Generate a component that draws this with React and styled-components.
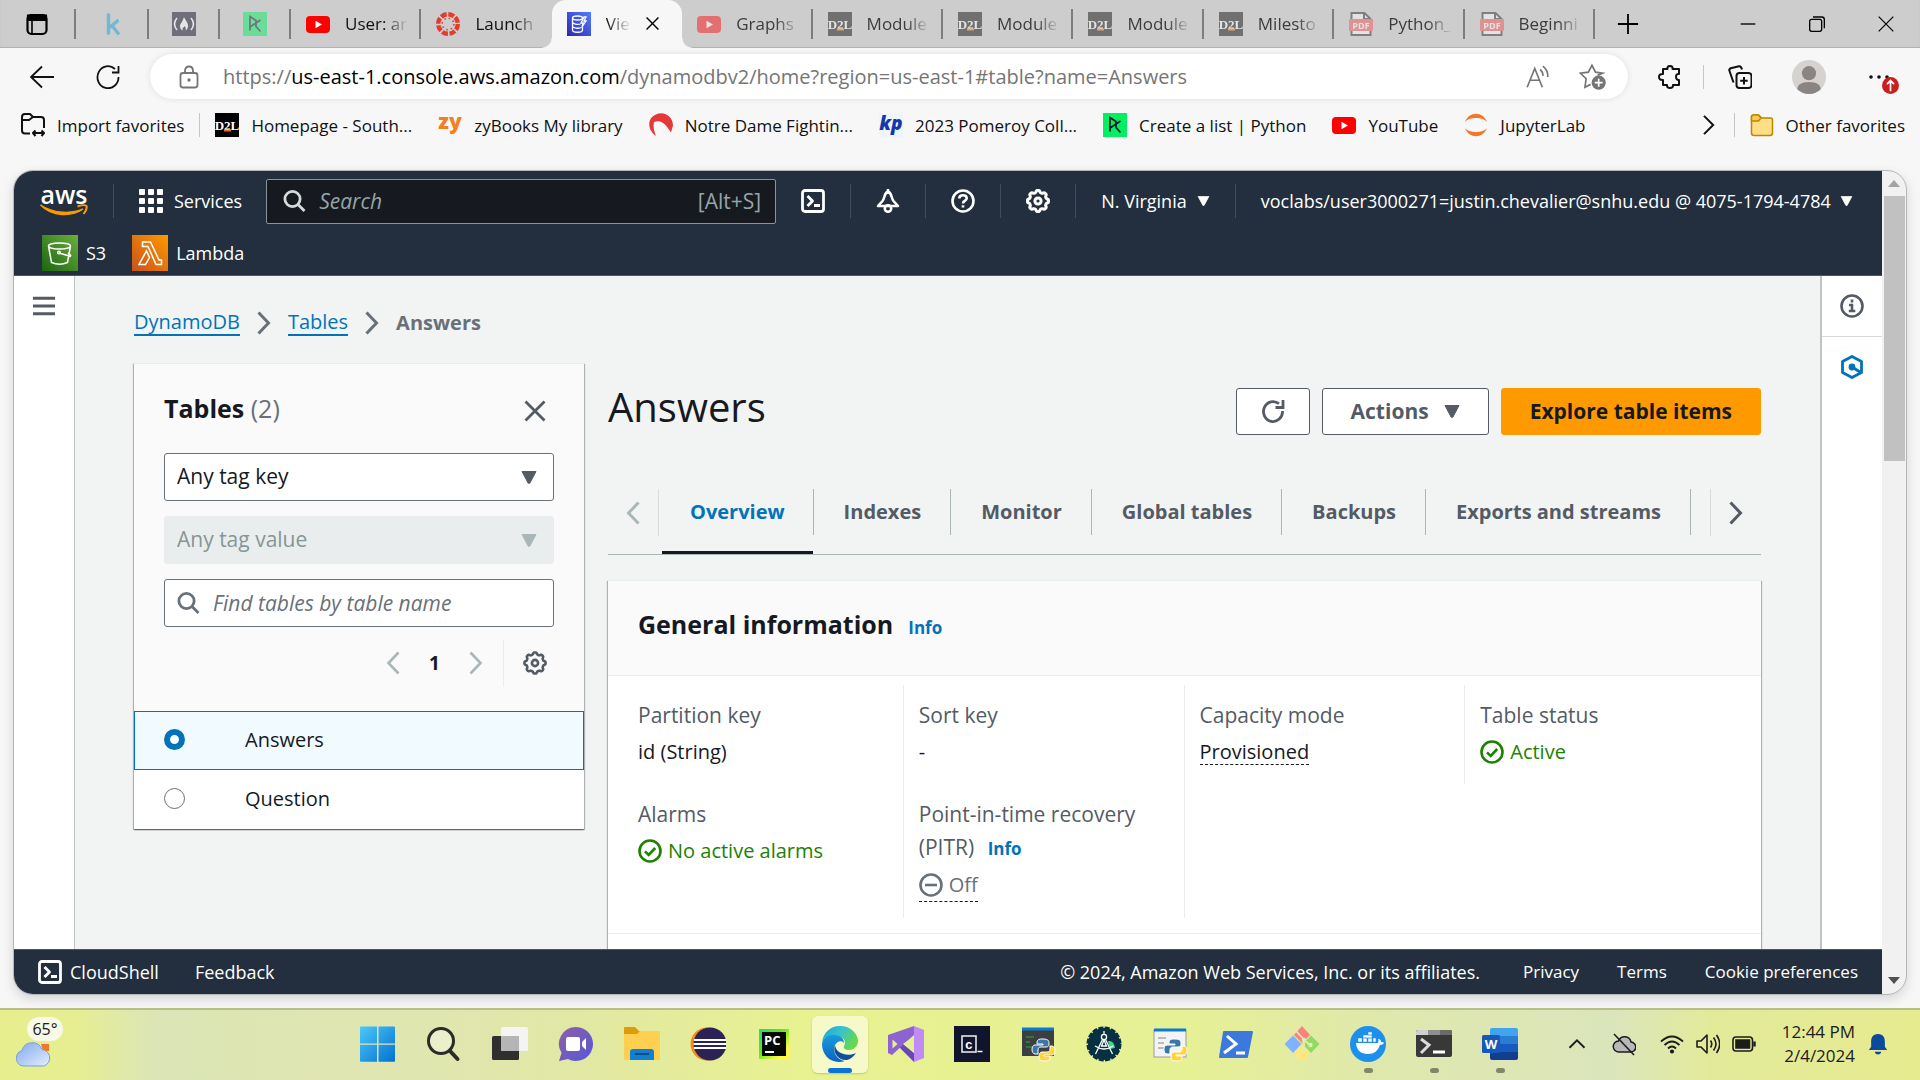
import React from 'react';
import styled, { createGlobalStyle, css } from 'styled-components';

const ui = '"Open Sans", "Noto Sans", sans-serif';
const c = {
  chrome: '#f7f7f7',
  tabStrip: '#cdcdcd',
  navy: '#232f3e',
  ink: '#16191f',
  slate: '#545b64',
  grey: '#687078',
  mist: '#aab7b8',
  line: '#eaeded',
  page: '#f2f3f3',
  blue: '#0073bb',
  green: '#1d8102',
  orange: '#ff9900',
};

const GlobalStyle = createGlobalStyle`
  *, *::before, *::after { box-sizing: border-box; }
  body { margin: 0; background: ${c.chrome}; font-family: ${ui}; color: ${c.ink}; }
  button, input, select { font: inherit; color: inherit; margin: 0; }
  button { background: none; border: 0; padding: 0; cursor: pointer; }
  h1, h2, p, dl, dd, dt { margin: 0; }
  a { color: inherit; text-decoration: none; }
  svg { display: block; flex: none; }
`;

/* ---------- drawing helpers ---------- */

const Svg = ({ w = 24, h = w, box = 24, children, ...rest }) => (
  <svg width={w} height={h} viewBox={`0 0 ${box} ${box}`} fill="none" aria-hidden="true" {...rest}>
    {children}
  </svg>
);

const Stroke = ({ width = 2, color = 'currentColor', ...rest }) => (
  <Svg stroke={color} strokeWidth={width} {...rest} />
);

const gearOutline = Array.from({ length: 97 }, (_, i) => {
  const a = (i / 96) * Math.PI * 2;
  const r = 9.6 + 1 * Math.tanh(2 * Math.cos(a * 8));
  return `${i ? 'L' : 'M'}${(12 + r * Math.sin(a)).toFixed(2)} ${(12 - r * Math.cos(a)).toFixed(2)}`;
}).join('') + 'Z';

const GearIcon = ({ width = 2.6 }) => (
  <Stroke width={width} strokeLinejoin="round">
    <path d={gearOutline} />
    <circle cx="12" cy="12" r="3.1" />
  </Stroke>
);
const CloudShellIcon = () => (
  <Stroke width={2.8} strokeLinejoin="round">
    <rect x="1.5" y="1.5" width="21" height="21" rx="2.5" />
    <path d="M6.5 7l5 5-5 5M13 16.5h6" />
  </Stroke>
);
const SearchIcon = ({ size = 24 }) => (
  <Stroke w={size} width={2.8}>
    <circle cx="9.5" cy="10" r="7.6" />
    <path d="M15 15.5l6.500 6.5" />
  </Stroke>
);
const Chevron = ({ left, color = c.grey, w = 14, width = 3 }) => (
  <svg width={w} height="24" viewBox="0 0 14 24" fill="none" stroke={color} strokeWidth={width} aria-hidden="true">
    <path d={left ? 'M12.5 1.5L2.5 12l10 10.5' : 'M1.5 1.5l10 10.5-10 10.5'} />
  </svg>
);
const Caret = ({ size = 16, color = 'currentColor' }) => (
  <svg width={size} height={size - 3} viewBox="0 0 16 13" aria-hidden="true">
    <path d="M1 .5h14L8.800 12.200H7.200Z" fill={color} stroke={color} strokeLinejoin="round" />
  </svg>
);
const CheckIcon = () => (
  <Stroke width={2.6} color={c.green}>
    <circle cx="12" cy="12" r="10.5" />
    <path d="M7 12.300l3.700 3.700 6.500-7" />
  </Stroke>
);
const OffIcon = () => (
  <Stroke width={2.6} color={c.grey}>
    <circle cx="12" cy="12" r="10.5" />
    <path d="M6 12h12" />
  </Stroke>
);

/* ---------- site icons ---------- */

const YouTube = () => (
  <Svg>
    <rect x="0" y="4" width="24" height="17" rx="4" fill="#f00" />
    <path d="M9.500 8.800l6.500 3.700-6.500 3.700z" fill="#fff" />
  </Svg>
);
const D2L = () => (
  <Svg>
    <rect width="24" height="24" fill="#000" />
    <text x="12" y="17" fontFamily="Liberation Serif, serif" fontWeight="700" fontSize="13" textAnchor="middle" fill="#fff">D2L</text>
    <path d="M9 17.500h7" stroke="#e87511" strokeWidth="2" />
  </Svg>
);
const Pdf = () => (
  <Svg>
    <path d="M2.500 1h13l6 6v16h-19z" fill="#fff" stroke="#222" strokeWidth="2" />
    <path d="M15 1v6h6" stroke="#222" strokeWidth="2" />
    <rect x="0" y="7" width="24" height="12" rx="1" fill="#f44b4b" />
    <text x="12" y="16.500" fontFamily="Open Sans, sans-serif" fontWeight="700" fontSize="9" textAnchor="middle" fill="#fff">PDF</text>
  </Svg>
);
const DataCamp = ({ bg = '#03ef62' }) => (
  <Svg>
    <rect width="24" height="24" fill={bg} />
    <path d="M7 18.500V4.500l6 4V14.500L17.500 19.500M17.500 8L7 15" stroke="#05192d" strokeWidth="1.700" />
  </Svg>
);
const Khan = () => (
  <Svg><path d="M7.500 1.500v21M17.500 8l-9 7.500M11 13.500l7 9" stroke="#14a0d8" strokeWidth="3.400" /></Svg>
);
const FreeCodeCamp = () => (
  <Svg>
    <rect width="24" height="24" fill="#0a0a23" />
    <path d="M5 6q-5 6 0 12M19 6q5 6 0 12" stroke="#fff" strokeWidth="1.600" />
    <path d="M12 5c1 3 4 5 4 9 0 2-1 3.500-2.500 4.500.8-2 .2-3-1-4.500-.5 1.500-2 1.500-2 3 0 .8.300 1.200.700 1.600C9 18 8 16.500 8 14c0-2 2-3 4-9z" fill="#fff" />
  </Svg>
);
const Canvas = () => (
  <Svg>
    <circle cx="12" cy="12" r="9.800" stroke="#e53b2e" strokeWidth="4.400" strokeDasharray="6 1.700" />
    <circle cx="12" cy="12" r="5.800" stroke="#e53b2e" strokeWidth="1.600" strokeDasharray="1.500 3.055" />
  </Svg>
);
const Dynamo = () => (
  <Svg>
    <defs>
      <linearGradient id="dyn" x1="0" y1="1" x2="1" y2="0"><stop stopColor="#2e27ad" /><stop offset="1" stopColor="#527fff" /></linearGradient>
    </defs>
    <rect width="24" height="24" fill="url(#dyn)" />
    <g stroke="#fff" strokeWidth="1.300">
      <ellipse cx="10.500" cy="6" rx="5" ry="2" />
      <path d="M5.500 6v12c0 3 10 3 10 0v-3M5.500 10c0 2 5 3 8 2M5.500 14c0 2 6 3 9 1.500M17 5l-3 6h2l-1 4 4-6h-2l2-4z" />
    </g>
  </Svg>
);
const ZyBooks = () => (
  <Svg><text x="12" y="16" fontFamily="Open Sans, sans-serif" fontWeight="800" fontSize="21" textAnchor="middle" fill="#f57f20">zy</text></Svg>
);
const NotreDame = () => (
  <Svg><path d="M7 23C-2 17-2 5 7 1.500c8-4 17 2 17 11l-2 7C17 12 13 6 5 9c-1 5 0 9 2 14z" fill="#e4383b" /></Svg>
);
const Kp = () => (
  <Svg>
    <rect width="24" height="24" fill="#eef5fd" />
    <text x="12" y="17" fontFamily="Open Sans, sans-serif" fontWeight="800" fontStyle="italic" fontSize="19" textAnchor="middle" fill="#1437ad">kp</text>
  </Svg>
);
const Jupyter = () => (
  <Svg><path d="M1 9C5-2 19-2 23 9 19 3.500 5 3.500 1 9zM1 15c4 11 18 11 22 0-4 5.500-18 5.500-22 0z" fill="#f37726" /></Svg>
);
const FolderSmall = () => (
  <Svg>
    <path d="M1.500 4q0-2 2-2h5l3 3h9q2 0 2 2v13q0 2.500-2.500 2.500H4q-2.500 0-2.500-2.500z" fill="#ffdf85" stroke="#b8870b" strokeWidth="1.500" />
    <path d="M1.500 4q0-2 2-2h5l2.500 3-2.500 3h-7z" fill="#f9cb45" stroke="#b8870b" strokeWidth="1.500" />
  </Svg>
);

/* ---------- browser chrome ---------- */

const Desktop = styled.div`
  display: flex;
  flex-direction: column;
  height: 100vh;
  overflow: hidden;
`;

const TabStrip = styled.header`
  display: flex;
  flex: none;
  height: 48px;
  background: ${c.tabStrip};
  box-shadow: inset 0 -1px 1px rgba(0, 0, 0, 0.14);
`;

const SiteTabs = styled.div`
  flex: 1;
  min-width: 0;
  display: grid;
  grid-auto-flow: column;
  grid-auto-columns: minmax(0, 1fr);
`;

const stripDivider = css`
  &::after {
    content: '';
    flex: none;
    width: 2px;
    height: 30px;
    background: ${(p) => (p.$bare ? 'transparent' : '#7d7d7d')};
  }
`;

const PinnedTab = styled.button`
  flex: none;
  width: ${(p) => (p.$first ? 78 : 71)}px;
  padding-right: ${(p) => (p.$first ? 2 : 0)}px;
  display: flex;
  align-items: center;
  ${stripDivider}
  > svg { margin: auto; opacity: ${(p) => (p.$first ? 1 : 0.48)}; }
`;

const Tab = styled.button`
  position: relative;
  min-width: 0;
  display: flex;
  align-items: center;
  gap: 15px;
  padding: 0 0 1px 15px;
  font-size: 17px;
  color: ${(p) => (p.$asleep ? '#3c3c3c' : '#111')};
  ${stripDivider}
  &::after { margin-left: -4px; }
  > svg:first-child { opacity: ${(p) => (p.$asleep ? 0.45 : 1)}; }
  ${(p) =>
    p.$active &&
    css`
      padding-right: 23px;
      background: ${c.chrome};
      border-radius: 14px 14px 0 0;
      &::before, &::after {
        content: '';
        position: absolute;
        bottom: 0;
        width: 10px;
        height: 10px;
        margin: 0;
      }
      &::before { left: -10px; background: radial-gradient(circle at 0 0, transparent 9px, ${c.chrome} 10px); }
      &::after { right: -10px; background: radial-gradient(circle at 100% 0, transparent 9px, ${c.chrome} 10px); }
    `}
`;

const TabLabel = styled.span`
  flex: 1;
  min-width: 0;
  overflow: hidden;
  white-space: nowrap;
  text-align: left;
  -webkit-mask-image: linear-gradient(to right, #000 calc(100% - 24px), transparent);
  mask-image: linear-gradient(to right, #000 calc(100% - 24px), transparent);
`;

const StripEnd = styled.div`
  flex: none;
  width: 325px;
  display: flex;
  align-items: center;
  justify-content: space-between;
  padding: 0 26px 0 22px;
`;

const WindowButtons = styled.div`
  display: flex;
  gap: 53px;
`;

const Toolbar = styled.div`
  flex: none;
  display: flex;
  align-items: center;
  height: 57px;
  padding: 0 2px 0 9px;
`;

const ToolButton = styled.button`
  flex: none;
  position: relative;
  width: ${(p) => p.$width || 66}px;
  height: 45px;
  display: grid;
  place-items: center;
`;

const AddressBar = styled.div`
  flex: 1;
  display: flex;
  align-items: center;
  height: 45px;
  margin: 0 9px;
  padding: 0 22px 0 27px;
  border-radius: 23px;
  background: #fff;
  box-shadow: 0 0 6px rgba(0, 0, 0, 0.1);
  color: #757575;
`;

const Url = styled.a`
  flex: 1;
  margin-left: 22px;
  font-size: 20px;
  white-space: nowrap;
  b { font-weight: 400; color: #000; }
`;

const AddressTools = styled.div`
  display: flex;
  gap: 28px;
`;

const ThinRule = styled.span`
  flex: none;
  width: 1px;
  height: ${(p) => p.$height || 24}px;
  background: ${(p) => p.$color || '#c6c6c6'};
`;

const Avatar = styled.span`
  width: 34px;
  height: 34px;
  border-radius: 50%;
  overflow: hidden;
  background: #d5d2cf;
`;

const UpdateBadge = styled.span`
  position: absolute;
  right: 19px;
  bottom: 5px;
`;

const Favorites = styled.nav`
  flex: none;
  display: flex;
  align-items: center;
  gap: 26px;
  height: 40px;
  padding: 0 15px 0 21px;
  font-size: 17px;
  white-space: nowrap;
  color: #111;
`;

const Favorite = styled.a`
  display: flex;
  align-items: center;
  gap: 12px;
`;

const FavGroup = styled.div`
  display: flex;
  align-items: center;
  gap: 15px;
  margin-left: ${(p) => (p.$end ? 'auto' : 0)};
`;

/* ---------- page frame ---------- */

const Frame = styled.div`
  flex: 1;
  min-height: 0;
  display: flex;
  margin: 25px 13px 13px;
  border: 1px solid #b4b7ba;
  border-radius: 20px;
  overflow: hidden;
  background: #f1f1f1;
  box-shadow: 0 4px 12px rgba(0, 0, 0, 0.14);
`;

const Page = styled.div`
  flex: 1;
  min-width: 0;
  display: flex;
  flex-direction: column;
`;

const ScrollTrack = styled.div`
  flex: none;
  width: 24px;
  display: flex;
  flex-direction: column;
  align-items: center;
  padding: 9px 0 10px;
`;

const ScrollThumb = styled.div`
  width: 21px;
  flex: 0 0 33%;
  margin: 9px 0 auto;
  background: #c1c1c1;
`;

/* ---------- aws header and footer ---------- */

const AwsHeader = styled.header`
  flex: none;
  background: ${c.navy};
  border-bottom: 1px solid #4b5563;
  color: #fff;
  font-size: 18px;
  white-space: nowrap;
`;

const HeaderRow = styled.div`
  display: flex;
  align-items: center;
  height: 60px;
  padding-left: 26px;
`;

const Shortcuts = styled.nav`
  display: flex;
  gap: 26px;
  height: 44px;
  align-items: center;
  padding-left: 28px;
`;

const Shortcut = styled.a`
  display: flex;
  align-items: center;
  gap: 8px;
`;

const Logo = styled.a`
  width: 48px;
  display: flex;
  flex-direction: column;
  align-items: center;
  padding-bottom: 2px;
  font-size: 25px;
  font-weight: 600;
  line-height: 20px;
  margin-right: 25px;
`;

const HeaderRule = styled(ThinRule).attrs({ $height: 34, $color: '#414d5c' })``;

const HeaderButton = styled.button`
  display: flex;
  align-items: center;
  gap: ${(p) => p.$gap || 10}px;
  padding: 0 25px;
`;

const HeaderIcon = styled.button`
  flex: none;
  width: 75px;
  height: 34px;
  display: grid;
  place-items: center;
  border-right: 1px solid #414d5c;
  color: #fff;
`;

const HeaderSearch = styled.label`
  flex: 0 1 510px;
  min-width: 0;
  display: flex;
  align-items: center;
  gap: 12px;
  height: 45px;
  margin-left: -1px;
  padding: 0 14px 1px 16px;
  border: 1px solid #879596;
  border-radius: 2px;
  background: #161a20;
  color: #d5dbdb;
  font-size: 21px;
  kbd { font-family: inherit; color: #95a5a6; }
`;

const BareInput = styled.input`
  flex: 1;
  min-width: 0;
  padding: 0;
  border: 0;
  outline: 0;
  background: none;
  &::placeholder { color: ${(p) => p.$hint}; font-style: italic; opacity: 1; }
`;

const AwsFooter = styled.footer`
  flex: none;
  display: flex;
  align-items: center;
  height: 45px;
  padding: 0 24px 1px;
  border-top: 1px solid #4b5563;
  background: ${c.navy};
  color: #fff;
  font-size: 17px;
  white-space: nowrap;
`;

const FooterLink = styled.a`
  display: flex;
  align-items: center;
  gap: 8px;
  margin-left: ${(p) => p.$lead || 0}px;
  font-size: ${(p) => (p.$tool ? 18 : 17)}px;
`;

const Copyright = styled.span`
  margin-left: auto;
  font-size: 18px;
`;

/* ---------- console body ---------- */

const Body = styled.div`
  flex: 1;
  min-height: 0;
  display: flex;
  background: ${c.page};
`;

const SideRail = styled.aside`
  flex: none;
  width: ${(p) => (p.$right ? 62 : 61)}px;
  display: flex;
  flex-direction: column;
  background: #fff;
  color: ${c.slate};
  border: 0 solid #bcc4c6;
  border-width: ${(p) => (p.$right ? '0 0 0 2px' : '0 1px 0 0')};
`;

const RailButton = styled.button`
  height: ${(p) => (p.$lined ? 61 : 60)}px;
  display: grid;
  place-items: center;
  border-bottom: ${(p) => (p.$lined ? `1px solid #d5dbdb` : 0)};
`;

const Content = styled.div`
  flex: 1;
  min-width: 0;
  padding: 31px 59px 0;
  overflow: hidden;
`;

const Breadcrumbs = styled.nav`
  display: flex;
  align-items: center;
  gap: 17px;
  height: 31px;
  margin-bottom: 25px;
  font-size: 20px;
  line-height: 25px;
  a { color: ${c.blue}; border-bottom: 2px solid ${c.blue}; }
  span { color: ${c.grey}; font-weight: 700; }
`;

const Split = styled.div`
  display: flex;
  align-items: flex-start;
  gap: 24px;
`;

const cardShadow = css`
  background: #fff;
  border-top: 1px solid ${c.line};
  box-shadow: 0 1px 1px rgba(0, 28, 36, 0.35), 1px 1px 1px rgba(0, 28, 36, 0.25), -1px 1px 1px rgba(0, 28, 36, 0.25);
`;

const TablesPanel = styled.section`
  flex: 0 0 450px;
  ${cardShadow}
`;

const PanelTop = styled.div`
  display: flex;
  flex-direction: column;
  gap: 15px;
  padding: 29px 30px 27px;
  background: #fafafa;
`;

const PanelHeading = styled.div`
  display: flex;
  justify-content: space-between;
  height: 45px;
  button { align-self: flex-start; padding: 6px 7px; color: ${c.slate}; }
`;

const Heading = styled.h2`
  font-size: 25px;
  line-height: ${(p) => p.$line || 30}px;
  font-weight: 700;
  span { font-weight: 400; color: ${c.grey}; }
`;

const field = css`
  width: 100%;
  height: 48px;
  border: 1px solid ${c.grey};
  border-radius: 3px;
  background: #fff;
  font-size: 21px;
`;

const SelectBox = styled.label`
  position: relative;
  display: block;
  select {
    ${field}
    appearance: none;
    padding: 0 12px 2px;
    color: ${c.ink};
    &:disabled { opacity: 1; color: #879596; background: #eaeded; border-color: #eaeded; }
  }
  svg { position: absolute; right: 17px; top: 18px; pointer-events: none; }
`;

const FindBox = styled.label`
  ${field}
  display: flex;
  align-items: center;
  gap: 12px;
  padding: 0 12px 1px;
  color: ${c.grey};
`;

const Pager = styled.div`
  display: flex;
  align-items: center;
  justify-content: flex-end;
  height: 42px;
  font-size: 19px;
  font-weight: 700;
  button:last-child { padding: 0 7px 0 19px; color: ${c.slate}; }
`;

const PageNumber = styled.button`
  width: 69px;
`;

const PagerNext = styled.button`
  margin-right: 20px;
`;

const TableList = styled.table`
  width: 100%;
  border-collapse: collapse;
  font-size: 20px;
`;

const TableRow = styled.tr`
  height: 59px;
  background: ${(p) => (p.$selected ? '#f1faff' : '#fff')};
  outline: ${(p) => (p.$selected ? `1px solid ${c.blue}` : 'none')};
  outline-offset: -1px;
  td { padding: 0 0 2px; }
  td:first-child { width: 111px; padding-left: 30px; }
`;

const Radio = styled.input`
  appearance: none;
  display: block;
  width: 21px;
  height: 21px;
  border: 1px solid ${c.grey};
  border-radius: 50%;
  background: #fff;
  &:checked { border: 6px solid ${c.blue}; }
`;

const Main = styled.main`
  flex: 1;
  min-width: 0;
  padding-top: 25px;
`;

const TitleRow = styled.div`
  display: flex;
  gap: 12px;
  height: 47px;
`;

const Title = styled.h1`
  flex: 1;
  font-size: 40px;
  line-height: 38px;
  font-weight: 400;
`;

const Action = styled.button`
  display: flex;
  align-items: center;
  justify-content: center;
  gap: 15px;
  padding: 0 ${(p) => p.$pad || 28}px 1px;
  border: 1px solid ${(p) => (p.$primary ? c.orange : c.slate)};
  border-radius: 3px;
  background: ${(p) => (p.$primary ? c.orange : '#fff')};
  color: ${(p) => (p.$primary ? c.ink : c.slate)};
  font-size: 21px;
  font-weight: 700;
`;

const TabBar = styled.div`
  display: flex;
  height: 66px;
  margin-top: 54px;
  border-bottom: 1px solid ${c.mist};
`;

const TabScroll = styled.button`
  flex: none;
  width: 51px;
  height: 47px;
  display: grid;
  place-items: center;
  border: 0 solid #d5dbdb;
  border-width: ${(p) => (p.$end ? '0 0 0 1px' : '0 1px 0 0')};
`;

const TabList = styled.div`
  flex: 1;
  min-width: 0;
  display: flex;
  padding-left: 3px;
  overflow: hidden;
`;

const ViewTab = styled.button`
  flex: none;
  height: 65px;
  display: flex;
  align-items: flex-start;
  margin-right: 1px;
  border-bottom: 3px solid ${(p) => (p.$active ? c.ink : 'transparent')};
  color: ${(p) => (p.$active ? c.blue : c.slate)};
  font-size: 20px;
  font-weight: 700;
  span {
    height: 46px;
    line-height: 46px;
    padding: ${(p) => (p.$active ? '0 28px' : '0 29px 0 30px')};
    margin-right: -1px;
    border-right: 1px solid ${c.mist};
  }
`;

const Card = styled.section`
  margin-top: 25px;
  ${cardShadow}
`;

const CardHeader = styled.div`
  display: flex;
  align-items: baseline;
  gap: 15px;
  height: 95px;
  padding: 25px 30px 0;
  background: #fafafa;
  border-bottom: 1px solid ${c.line};
`;

const InfoLink = styled.a`
  font-size: 17px;
  font-weight: 700;
  color: ${c.blue};
`;

const Facts = styled.dl`
  display: grid;
  grid-template-columns: repeat(4, 1fr);
  padding: 9px 15px 15px;
  border-bottom: 1px solid ${c.line};
`;

const Fact = styled.div`
  padding: 14px 15px 16px;
  border-right: ${(p) => (p.$last ? 0 : `1px solid ${c.line}`)};
  font-size: 20px;
  line-height: 33px;
  dt { color: ${c.slate}; font-size: 21px; }
  dd { display: flex; margin-top: 3px; }
  dt a { margin-left: 8px; }
`;

const Status = styled.span`
  display: flex;
  align-items: center;
  gap: 6px;
  color: ${(p) => (p.$off ? c.grey : c.green)};
`;

const Hint = styled.span`
  height: ${(p) => p.$height || 30}px;
  border-bottom: 1px dashed ${c.ink};
`;

const Below = styled.div`
  height: 60px;
`;

/* ---------- taskbar ---------- */

const Taskbar = styled.footer`
  flex: none;
  display: flex;
  align-items: center;
  height: 72px;
  padding-bottom: 2px;
  border-top: 2px solid #b7be88;
  background: linear-gradient(90deg, #e8ee8d 0%, #e6ee92 4%, #dce5b6 8%, #e0e6ae 24%, #e2e9a0 32%, #e8f290 42%, #e6f095 62%, #dfe8ac 72%, #dbe5bc 84%, #e2ea9a 89%, #e7ea8f 100%);
  color: #1c1c1c;
`;

const Weather = styled.button`
  flex: none;
  position: relative;
  width: 345px;
  height: 56px;
  padding-left: 15px;
  > svg { margin-top: 18px; }
`;

const Temperature = styled.span`
  position: absolute;
  left: 27px;
  top: 1px;
  width: 36px;
  height: 24px;
  border-radius: 12px;
  background: rgba(250, 250, 240, 0.9);
  font-size: 16px;
  line-height: 24px;
  text-align: center;
`;

const Apps = styled.nav`
  flex: none;
  display: flex;
`;

const AppButton = styled.button`
  position: relative;
  width: 66px;
  height: 57px;
  display: grid;
  place-items: center;
  ${(p) =>
    p.$current &&
    css`
      &::before {
        content: '';
        position: absolute;
        inset: 0 5px;
        border-radius: 6px;
        background: rgba(255, 255, 240, 0.6);
        box-shadow: 0 1px 2px rgba(0, 0, 0, 0.18);
      }
    `}
  ${(p) =>
    (p.$running || p.$current) &&
    css`
      &::after {
        content: '';
        position: absolute;
        bottom: 0;
        width: ${p.$current ? 24 : 9}px;
        height: 5px;
        border-radius: 3px;
        background: ${p.$current ? '#0a74d4' : '#82876a'};
      }
    `}
  > svg { position: relative; }
`;

const Tray = styled.div`
  flex: 1;
  display: flex;
  align-items: center;
  justify-content: flex-end;
  gap: 12px;
  padding-right: 31px;
`;

const TrayGroup = styled.div`
  display: flex;
  align-items: center;
  gap: 26px;
  margin-right: 12px;
`;

const Clock = styled.button`
  margin-left: 14px;
  font-size: 17px;
  line-height: 24px;
  text-align: right;
`;

const AppIcon = (p) => <Svg w={36} box={36} {...p} />;

const PythonMark = () => (
  <g stroke="#fff" strokeWidth="1">
    <path d="M23 14c-5 0-5 2-5 5h6v1h-8c-4 0-4 9 0 9h3v-4c0-2 1-3 3-3h5c2 0 3-1 3-3 0-4-1-5-7-5z" transform="translate(-1 -1)" fill="#3a77a8" />
    <path d="M24 36c5 0 5-2 5-5h-6v-1h8c4 0 4-9 0-9h-2v3c0 2-1 3-3 3h-5c-2 0-3 2-3 4 0 4 1 5 6 5z" transform="translate(1 -1)" fill="#ffd43b" />
  </g>
);

const apps = [
  ['Start', <AppIcon><defs><linearGradient id="win" x1="0" y1="0" x2="1" y2="1"><stop stopColor="#4cc8fa" /><stop offset="1" stopColor="#0370d0" /></linearGradient></defs><path d="M0 1.500Q0 .5 1 .5h16v17H0zM18.500.5H34q1 0 1 1v16H18.500zM0 18.800h17v17H1q-1 0-1-1zM18.500 18.800H35v16q0 1-1 1H18.500z" fill="url(#win)" /></AppIcon>],
  ['Search', <AppIcon><circle cx="15" cy="15" r="12.500" stroke="#2b2b2b" strokeWidth="3" fill="#fff" fillOpacity=".35" /><path d="M24 25l7.500 8" stroke="#2b2b2b" strokeWidth="4" strokeLinecap="round" /></AppIcon>],
  ['Task view', <AppIcon><rect x="0" y="10" width="27" height="24" rx="1.500" fill="#2f2f2f" /><rect x="9" y="1" width="27" height="24" rx="1.500" fill="#f4f4f4" /><path d="M9 10h18v15H9z" fill="#b5b5b5" /></AppIcon>],
  ['Chat', <AppIcon><defs><linearGradient id="chat" x1="0" y1="0" x2="1" y2="1"><stop stopColor="#8f60a8" /><stop offset="1" stopColor="#5557d6" /></linearGradient></defs><path d="M18 1a17 17 0 1 1-8 32l-9 2 2.500-8A17 17 0 0 1 18 1z" fill="url(#chat)" /><rect x="8" y="11" width="14" height="14" rx="2" fill="#fff" /><path d="M24 16l4-4v12l-4-4z" fill="#fff" /></AppIcon>],
  ['File Explorer', <AppIcon><path d="M0 2q0-1 1-1h10l4 4h20v10H0z" fill="#dd9d0a" /><path d="M0 8h13l3-3h19q1 0 1 1v27q0 1-1 1H1q-1 0-1-1z" fill="#ffcf52" /><path d="M6 34V26q0-3 3-3h18q3 0 3 3v8z" fill="#1180d2" /><path d="M11 28h14" stroke="#0a4c86" strokeWidth="2" /></AppIcon>],
  ['Eclipse', <AppIcon><circle cx="17" cy="18" r="16.500" fill="#f48b1f" /><circle cx="20" cy="18" r="16.500" fill="#2c2255" /><path d="M4 14h32M3.500 18h33M4 22h32" stroke="#fff" strokeWidth="1.800" /></AppIcon>],
  ['PyCharm', <AppIcon><defs><linearGradient id="pc" x1="0" y1="0" x2="1" y2="1"><stop stopColor="#21d789" /><stop offset=".4" stopColor="#5fe61a" /><stop offset=".8" stopColor="#fcf84a" /></linearGradient></defs><rect x="3" y="3" width="30" height="30" fill="url(#pc)" /><rect x="6" y="6" width="24" height="24" fill="#050805" /><text x="8" y="19" fontFamily="Open Sans, sans-serif" fontWeight="700" fontSize="13" fill="#fff">PC</text><path d="M9 26h9" stroke="#fff" strokeWidth="2" /></AppIcon>],
  ['Microsoft Edge', <AppIcon><defs><linearGradient id="eg" x1="0" y1="0" x2="1" y2=".5"><stop stopColor="#1f9fe0" /><stop offset=".5" stopColor="#36c2cf" /><stop offset="1" stopColor="#66d84c" /></linearGradient><linearGradient id="eb" x1="0" y1="0" x2="0" y2="1"><stop stopColor="#189ddc" /><stop offset="1" stopColor="#0b62c4" /></linearGradient></defs><path d="M0 17C1 6 9 0 18 0c11 0 18 8 18 15 0 6-5 9-9 9-4 0-6-2-5-4 3-5-1-9-6-10C8 8 2 11 0 17z" fill="url(#eg)" /><path d="M0 18c1-6 7-10 13-9 6 0 9 4 9 8-2-3-7-2-9 2-3 7 2 15 10 16C10 39 0 30 0 18z" fill="url(#eb)" /><path d="M13 19c-3 8 4 16 12 15 4-1 7-4 9-7-8 4-20 1-21-8z" fill="#114f9c" /></AppIcon>],
  ['Visual Studio', <AppIcon><path d="M0 10l4-2 22 19V36z" fill="#6b47b5" /><path d="M0 9v18l4 2L26 9V0z" fill="#8f63cf" /><path d="M4.500 13.500v9l5-4.500z" fill="#e5ee98" /><path d="M26 0l10 4v28l-10 4z" fill="#c08bf5" /><path d="M26 10L15 18l11 9z" fill="#e5ee98" /></AppIcon>],
  ['Console', <AppIcon><rect width="36" height="36" fill="#10142c" /><rect x="8" y="10" width="14" height="16" stroke="#e6e6e6" strokeWidth="1.600" /><text x="15" y="22.500" fontFamily="Liberation Mono, monospace" fontWeight="700" fontSize="13" textAnchor="middle" fill="#fff">c</text><path d="M23.500 25.500h5" stroke="#fff" strokeWidth="1.500" /></AppIcon>],
  ['Python console', <AppIcon><rect x="2" y="2" width="32" height="28" fill="#3c3f41" /><path d="M2 3h32" stroke="#0a7bd2" strokeWidth="3" /><path d="M6 11h8M6 16h4M6 21h7" stroke="#2f8a38" strokeWidth="1.500" /><PythonMark /></AppIcon>],
  ['Android Studio', <AppIcon><circle cx="18" cy="18" r="16" fill="#073042" stroke="#073042" strokeWidth="3" strokeDasharray="5 1.300" /><path d="M22 15q6-1 7 7l-5 1z" fill="#3ddc84" /><g stroke="#fff" strokeWidth="1.300"><circle cx="18" cy="11" r="2.600" /><path d="M18 5V8.500M16.500 13.500L9.500 28M19.500 13.500L26.500 28M9 20q9 6 18 0M15.500 20l2.500-6 2.500 6z" /></g></AppIcon>],
  ['IDLE', <AppIcon><rect x="2" y="4" width="32" height="27" fill="#f3f3f3" stroke="#9b9b9b" /><path d="M2 4h32" stroke="#0a7bd2" strokeWidth="3" /><path d="M6 12h8M6 17h6M6 22h7" stroke="#a9a9a9" strokeWidth="1.500" /><PythonMark /></AppIcon>],
  ['PowerShell', <AppIcon><path d="M6 5h28q1 0 1 1l-5 25q0 1-1 1H2q-1 0-1-1L5 6q0-1 1-1z" fill="#3d78dc" /><path d="M9 10l9 8-12 9M18 27h9" stroke="#fff" strokeWidth="3" /></AppIcon>],
  ['Git', <AppIcon><path d="M18 0l8 9-8 8-8-8z" fill="#fb8080" /><path d="M9 9.500l8.500 8.500L9 27 .5 18z" fill="#80b3ff" /><path d="M27 9.500l8.500 8.500-8.500 9-8.500-9z" fill="#8fdb66" /><path d="M18 19l8 8.500-8 8.500-8-8.500z" fill="#ffe680" /><path d="M12 5l8 8.500V24M20 14l6 5" stroke="#e3ecac" strokeWidth="1.800" /><circle cx="20" cy="14" r="2.200" fill="#e3ecac" /><circle cx="20" cy="24" r="2.200" fill="#e3ecac" /><circle cx="26.500" cy="19" r="2.200" fill="#e3ecac" /></AppIcon>],
  ['Docker', <AppIcon><circle cx="18" cy="18" r="18" fill="#1d90ec" /><path d="M6 17h22q1-3 0-4 3 0 3 3 2-.5 3 1-1 2-4 2-3 9-12 9-11 0-12-11z" fill="#fff" /><path d="M8 12h4v4H8zM13 12h4v4h-4zM18 12h4v4h-4zM23 12h3v4h-3zM13 9h9v3h-9zM18 6h4v3h-4z" fill="#fff" stroke="#1d90ec" strokeWidth=".5" /></AppIcon>, true],
  ['Terminal', <AppIcon><rect x="0" y="4" width="36" height="27" rx="2" fill="#383838" /><path d="M0 9V6q0-2 2-2h10v5z" fill="#cfcfcf" /><path d="M12 4h12v5H12z" fill="#8f8f8f" /><path d="M24 4h10q2 0 2 2v3H24z" fill="#6a6a6a" /><path d="M5 13l8 6-8 8" stroke="#dcdcdc" strokeWidth="3" /><path d="M17 26h12" stroke="#fff" strokeWidth="3" /></AppIcon>, true],
  ['Word', <AppIcon><path d="M8 4q0-2 2-2h24q2 0 2 2v6H8z" fill="#41a5ee" /><path d="M8 10h28v8H8z" fill="#2b7cd3" /><path d="M8 18h28v8H8z" fill="#185abd" /><path d="M8 26h28v6q0 2-2 2H10q-2 0-2-2z" fill="#103f91" /><rect x="0" y="9" width="18" height="18" rx="1.500" fill="#1858b8" /><text x="9" y="22.500" fontFamily="Open Sans, sans-serif" fontWeight="700" fontSize="13" textAnchor="middle" fill="#fff">W</text></AppIcon>, true],
];

const sites = [
  ['User: arr', <YouTube />, { $bare: false }],
  ['Launch A', <Canvas />, { $bare: true }],
  ['View', <Dynamo />, { $active: true }],
  ['Graphs i', <YouTube />, { $asleep: true }],
  ['Module', <D2L />, { $asleep: true }],
  ['Module', <D2L />, { $asleep: true }],
  ['Module', <D2L />, { $asleep: true }],
  ['Milesto', <D2L />, { $asleep: true }],
  ['Python_', <Pdf />, { $asleep: true }],
  ['Beginni', <Pdf />, { $asleep: true }],
];

const favorites = [
  ['zyBooks My library', <ZyBooks />],
  ['Notre Dame Fightin...', <NotreDame />],
  ['2023 Pomeroy Coll...', <Kp />],
  ['Create a list | Python', <DataCamp />],
  ['YouTube', <YouTube />],
  ['JupyterLab', <Jupyter />],
];

const views = ['Overview', 'Indexes', 'Monitor', 'Global tables', 'Backups', 'Exports and streams'];

function Browser() {
  return (
    <>
      <TabStrip>
        <PinnedTab $first aria-label="Tab actions">
          <Stroke w={24} width={2.2} color="#000"><rect x="2.500" y="3" width="19" height="19" rx="4" /><path d="M3 3.500h18v4.500H3z" fill="#000" /><path d="M7 8v14" strokeWidth="1.600" /></Stroke>
        </PinnedTab>
        <PinnedTab aria-label="Khan Academy"><Khan /></PinnedTab>
        <PinnedTab aria-label="freeCodeCamp"><FreeCodeCamp /></PinnedTab>
        <PinnedTab aria-label="DataCamp"><DataCamp /></PinnedTab>
        <SiteTabs>
          {sites.map(([label, icon, state], i) => (
            <Tab key={i} {...state}>
              {icon}
              <TabLabel>{label}</TabLabel>
              {state.$active && <Stroke w={13} width={2.6} color="#000"><path d="M1 1l22 22M23 1L1 23" /></Stroke>}
            </Tab>
          ))}
        </SiteTabs>
        <StripEnd>
          <button aria-label="New tab"><Stroke w={22} width={2} color="#000"><path d="M12 1v22M1 12h22" /></Stroke></button>
          <WindowButtons>
            <button aria-label="Minimize"><Stroke w={16} width={2} color="#000"><path d="M1 12h22" /></Stroke></button>
            <button aria-label="Restore"><Stroke w={16} width={2} color="#000"><rect x="1" y="5" width="18" height="18" rx="3" /><path d="M6 1.500h13q4 0 4 4v13" /></Stroke></button>
            <button aria-label="Close"><Stroke w={16} width={1.8} color="#000"><path d="M1 1l22 22M23 1L1 23" /></Stroke></button>
          </WindowButtons>
        </StripEnd>
      </TabStrip>

      <Toolbar>
        <ToolButton aria-label="Back"><Stroke width={1.8} color="#111"><path d="M24 12H1M12 1.500L1 12l11 10.500" /></Stroke></ToolButton>
        <ToolButton aria-label="Refresh"><Stroke width={1.8} color="#111"><path d="M22.500 12A10.500 11 0 1 1 19 4M22.500 1v6.500H16" /></Stroke></ToolButton>
        <AddressBar>
          <Stroke width={1.8}><rect x="3.500" y="8" width="17" height="14.500" rx="2.500" /><path d="M8 8V6q0-4.500 4-4.500T16 6v2" /><circle cx="12" cy="15" r=".8" fill="currentColor" /></Stroke>
          <Url href="#url">https://<b>us-east-1.console.aws.amazon.com</b>/dynamodbv2/home?region=us-east-1#table?name=Answers</Url>
          <AddressTools>
            <button aria-label="Read aloud"><Stroke w={26} width={1.5}><path d="M2 21.500L9 4l7 17.500M4.500 15h9M14 5q3 3 2.500 6M16.500 2q5 4 4.500 10" /></Stroke></button>
            <button aria-label="Add to favorites"><Svg w={27}><path d="M17 10.500l4.500-2-6.300-.9L12 1.500 8.800 7.600l-7 1 5 4.900-1 7.500 5-2.500" stroke="currentColor" strokeWidth="1.500" transform="translate(-.5 .5)" /><circle cx="17.500" cy="17.500" r="6.300" fill="#757575" /><path d="M17.500 14v7M14 17.500h7" stroke="#fff" strokeWidth="1.500" /></Svg></button>
          </AddressTools>
        </AddressBar>
        <ToolButton aria-label="Extensions"><Stroke width={2} color="#111" strokeLinejoin="round"><path d="M5 4h4.500q-.5-3 2.500-3t2.500 3H21v5q-3-.5-3 2.800T21 15v5h-6q.3 3-3 3t-3-3H5v-5q-4 .3-4-3t4-3z" /></Stroke></ToolButton>
        <ThinRule />
        <ToolButton $width={72} aria-label="Collections"><Stroke width={2} color="#111" strokeLinejoin="round"><rect x="8.500" y="8" width="15" height="15" rx="3" /><path d="M16 12v7.500M12.200 15.700h7.500M5.500 17.500L1.500 6q-.8-2 1.200-2.800L11 1.200q2-.5 3 3.300" /></Stroke></ToolButton>
        <ToolButton aria-label="Profile"><Avatar><Svg w={34}><circle cx="12" cy="9.300" r="5" fill="#8a8582" /><path d="M3.500 22q0-6.500 8.500-6.500t8.500 6.500l-3 2h-11z" fill="#8a8582" /></Svg></Avatar></ToolButton>
        <ToolButton $width={76} aria-label="Settings">
          <Svg><g fill="#111"><circle cx="3" cy="12" r="1.800" /><circle cx="11" cy="12" r="1.800" /><circle cx="19" cy="12" r="1.800" /></g></Svg>
          <UpdateBadge><Svg w={17}><circle cx="12" cy="12" r="12" fill="#c6201f" /><path d="M12 20V5M7 10l5-5 5 5" stroke="#fff" strokeWidth="2.400" /></Svg></UpdateBadge>
        </ToolButton>
      </Toolbar>

      <Favorites>
        <FavGroup>
          <Favorite href="#import"><Stroke width={2} color="#111" strokeLinejoin="round"><path d="M9 20.500H4Q1 20.500 1 17.500V4q0-3 3-3h5l3 3h8q3 0 3 3v8M1 7h7l4-3M12 20h11M14.500 17.500L12 20l2.500 3M20.500 17.500L23 20l-2.500 3" /></Stroke>Import favorites</Favorite>
          <ThinRule />
          <Favorite href="#homepage"><D2L />Homepage - South...</Favorite>
        </FavGroup>
        {favorites.map(([label, icon]) => (
          <Favorite key={label} href={`#${label}`}>{icon}{label}</Favorite>
        ))}
        <FavGroup $end>
          <button aria-label="More favorites"><Svg w={20}><path d="M6 1l11 11L6 23" stroke="#111" strokeWidth="2.400" /></Svg></button>
          <ThinRule />
          <Favorite href="#other"><FolderSmall />Other favorites</Favorite>
        </FavGroup>
      </Favorites>
    </>
  );
}

function Header() {
  return (
    <AwsHeader>
      <HeaderRow>
        <Logo href="#home">
          aws
          <svg width="48" height="13" viewBox="0 0 48 13" fill="none" aria-hidden="true">
            <path d="M.5 1C12 13 32 13 43 5 32 10 14 10 .5 1z" fill="#ff9900" stroke="#ff9900" strokeWidth="1.400" />
            <path d="M37.500 2.500q7-2.500 9-.5 1 3-3 8" stroke="#ff9900" strokeWidth="2" />
          </svg>
        </Logo>
        <HeaderRule />
        <HeaderButton $gap={11}>
          <Svg>
            {[0, 9, 18].map((y) => [0, 9, 18].map((x) => <rect key={`${x}-${y}`} x={x} y={y} width="6" height="6" rx="1" fill="#fff" />))}
          </Svg>
          Services
        </HeaderButton>
        <HeaderSearch>
          <SearchIcon />
          <BareInput type="search" aria-label="Search" placeholder="Search" $hint="#95a5a6" />
          <kbd>[Alt+S]</kbd>
        </HeaderSearch>
        <HeaderIcon aria-label="CloudShell"><CloudShellIcon /></HeaderIcon>
        <HeaderIcon aria-label="Notifications"><Stroke width={2.6} strokeLinejoin="round"><path d="M12 2.500C8 4 9 9 6.500 12L2 17h20l-4.500-5C15 9 16 4 12 2.500z" /><path d="M12 0v4" /><circle cx="12" cy="19.500" r="3.200" /></Stroke></HeaderIcon>
        <HeaderIcon aria-label="Help"><Stroke width={2.6}><circle cx="12" cy="12" r="10.500" /><path d="M8.300 9.500q0-3.300 3.700-3.300t3.700 3.100q0 1.700-2 2.700-1.700.9-1.700 2.500M12 16.200v2.300" /></Stroke></HeaderIcon>
        <HeaderIcon aria-label="Settings"><GearIcon width={3} /></HeaderIcon>
        <HeaderButton>N. Virginia<Caret size={13} /></HeaderButton>
        <HeaderRule />
        <HeaderButton $gap={9}>voclabs/user3000271=justin.chevalier@snhu.edu @ 4075-1794-4784<Caret size={13} /></HeaderButton>
      </HeaderRow>
      <Shortcuts>
        <Shortcut href="#s3">
          <AppIcon>
            <defs><linearGradient id="s3" x1="0" y1="1" x2="1" y2="0"><stop stopColor="#1b660f" /><stop offset="1" stopColor="#6cae3e" /></linearGradient></defs>
            <rect width="36" height="36" fill="url(#s3)" />
            <g stroke="#fff" strokeWidth="1.500"><ellipse cx="17.500" cy="11" rx="11" ry="3" /><path d="M6.500 11l3 16.500q8 3.500 16 0l3-16.500M17 18l12 3.500M29 21q-1-2-3-3" /><circle cx="17" cy="17.500" r="1.300" /></g>
          </AppIcon>
          S3
        </Shortcut>
        <Shortcut href="#lambda">
          <AppIcon>
            <defs><linearGradient id="lam" x1="0" y1="1" x2="1" y2="0"><stop stopColor="#c8511b" /><stop offset="1" stopColor="#ff9900" /></linearGradient></defs>
            <rect width="36" height="36" fill="url(#lam)" />
            <path d="M10.500 7h8l8.500 18h2.500v4.500H24L16 11.500h-5.500zM14.500 16l3 6.500-4 7H7z" stroke="#fff" strokeWidth="1.500" />
          </AppIcon>
          Lambda
        </Shortcut>
      </Shortcuts>
    </AwsHeader>
  );
}

function TablesNav() {
  return (
    <TablesPanel>
      <PanelTop>
        <PanelHeading>
          <Heading>Tables <span>(2)</span></Heading>
          <button aria-label="Close panel"><Stroke w={24} width={2.8}><path d="M2.500 2.500l19 19M21.500 2.500l-19 19" /></Stroke></button>
        </PanelHeading>
        <SelectBox>
          <select aria-label="Tag key" defaultValue="any"><option value="any">Any tag key</option></select>
          <Caret size={16} color={c.slate} />
        </SelectBox>
        <SelectBox>
          <select aria-label="Tag value" defaultValue="any" disabled><option value="any">Any tag value</option></select>
          <Caret size={16} color={c.mist} />
        </SelectBox>
        <FindBox>
          <SearchIcon />
          <BareInput type="search" aria-label="Find tables" placeholder="Find tables by table name" $hint={c.grey} />
        </FindBox>
        <Pager>
          <button aria-label="Previous page"><Chevron left color={c.mist} width={2.6} /></button>
          <PageNumber>1</PageNumber>
          <PagerNext aria-label="Next page"><Chevron color={c.mist} width={2.6} /></PagerNext>
          <ThinRule $height={47} $color={c.line} />
          <button aria-label="Preferences"><GearIcon /></button>
        </Pager>
      </PanelTop>
      <TableList>
        <tbody>
          {['Answers', 'Question'].map((name, i) => (
            <TableRow key={name} $selected={i === 0}>
              <td><Radio type="radio" name="table" id={name} defaultChecked={i === 0} /></td>
              <td><label htmlFor={name}>{name}</label></td>
            </TableRow>
          ))}
        </tbody>
      </TableList>
    </TablesPanel>
  );
}

function Details() {
  return (
    <Main>
      <TitleRow>
        <Title>Answers</Title>
        <Action $pad={24} aria-label="Refresh table">
          <Stroke width={2.8}><path d="M21.500 12A9.500 10 0 1 1 18 4.800M22 1v7.500h-7.500" /></Stroke>
        </Action>
        <Action>Actions<Caret size={16} /></Action>
        <Action $primary>Explore table items</Action>
      </TitleRow>
      <TabBar>
        <TabScroll aria-label="Scroll tabs left"><Chevron left color={c.mist} /></TabScroll>
        <TabList role="tablist">
          {views.map((v, i) => (
            <ViewTab key={v} role="tab" $active={i === 0}><span>{v}</span></ViewTab>
          ))}
        </TabList>
        <TabScroll $end aria-label="Scroll tabs right"><Chevron color={c.slate} /></TabScroll>
      </TabBar>
      <Card>
        <CardHeader>
          <Heading $line={36}>General information</Heading>
          <InfoLink href="#info">Info</InfoLink>
        </CardHeader>
        <Facts>
          <Fact><dt>Partition key</dt><dd>id (String)</dd></Fact>
          <Fact><dt>Sort key</dt><dd>-</dd></Fact>
          <Fact><dt>Capacity mode</dt><dd><Hint>Provisioned</Hint></dd></Fact>
          <Fact $last><dt>Table status</dt><dd><Status><CheckIcon />Active</Status></dd></Fact>
          <Fact><dt>Alarms</dt><dd><Status><CheckIcon />No active alarms</Status></dd></Fact>
          <Fact><dt>Point-in-time recovery (PITR) <InfoLink href="#pitr">Info</InfoLink></dt><dd><Hint $height={34}><Status $off><OffIcon />Off</Status></Hint></dd></Fact>
        </Facts>
        <Below />
      </Card>
    </Main>
  );
}

function TaskbarArea() {
  return (
    <Taskbar>
      <Weather aria-label="Weather">
        <svg width="37" height="27" viewBox="0 0 37 27" aria-hidden="true">
          <defs><linearGradient id="cloud" x1="0" y1="0" x2="1" y2="1"><stop stopColor="#7fa9ee" /><stop offset="1" stopColor="#e5eefe" /></linearGradient></defs>
          <path d="M26 4h8v7h-6z" fill="#f0782a" />
          <path d="M8 26a8 8 0 0 1-1-15.500A10.500 10.500 0 0 1 27 9.500 8.500 8.500 0 0 1 29 26z" fill="url(#cloud)" stroke="#7b9de0" />
        </svg>
        <Temperature>65°</Temperature>
      </Weather>
      <Apps>
        {apps.map(([name, icon, running]) => (
          <AppButton key={name} aria-label={name} $running={running} $current={name === 'Microsoft Edge'}>{icon}</AppButton>
        ))}
      </Apps>
      <Tray>
        <TrayGroup>
          <Svg w={18}><path d="M2 17L12 7l10 10" stroke="#1c1c1c" strokeWidth="2.400" /></Svg>
          <Svg><path d="M7 20a5.500 5.500 0 0 1-.5-11A6.500 6.500 0 0 1 19 10a5 5 0 0 1-.5 10z" fill="#b8b8b8" stroke="#1c1c1c" strokeWidth="1.500" /><path d="M2 2l20 21" stroke="#1c1c1c" strokeWidth="1.600" /></Svg>
        </TrayGroup>
        <Stroke width={1.800} color="#1c1c1c"><path d="M1 9.500q11-10 22 0M4.500 13q7.500-7 15 0M8 16.500q4-4 8 0" /><circle cx="12" cy="19.500" r="1.200" fill="#1c1c1c" /></Stroke>
        <Stroke width={1.600} color="#1c1c1c" strokeLinejoin="round"><path d="M1 9h4l6-6v18l-6-6H1zM14.500 8.500q2.500 3.500 0 7M17.500 5.500q5 6.500 0 13M20.500 3q6.500 9 0 18" /></Stroke>
        <Stroke width={1.600} color="#1c1c1c"><rect x="1" y="5" width="19.500" height="14" rx="3" /><path d="M4 8h13.500v8H4z" fill="#1c1c1c" /><path d="M22.500 9.500v5" strokeWidth="2.400" /></Stroke>
        <Clock>12:44 PM<br />2/4/2024</Clock>
        <Svg w={22}><path d="M12 1C6 1 4.500 5.500 4.500 9.500v5.500L2 18.500h20L19.500 15V9.500C19.500 5.500 18 1 12 1zM8.500 20.500h7Q15 23.500 12 23.500T8.500 20.500z" fill="#0a4a9c" /></Svg>
      </Tray>
    </Taskbar>
  );
}

export default function App() {
  return (
    <Desktop>
      <GlobalStyle />
      <Browser />
      <Frame>
        <Page>
          <Header />
          <Body>
            <SideRail>
              <RailButton aria-label="Menu"><Stroke w={22} width={3.2}><path d="M0 3.500h24M0 12h24M0 20.500h24" /></Stroke></RailButton>
            </SideRail>
            <Content>
              <Breadcrumbs>
                <a href="#dynamodb">DynamoDB</a>
                <Chevron />
                <a href="#tables">Tables</a>
                <Chevron />
                <span>Answers</span>
              </Breadcrumbs>
              <Split>
                <TablesNav />
                <Details />
              </Split>
            </Content>
            <SideRail $right>
              <RailButton $lined aria-label="Info panel"><Stroke width={2.600}><circle cx="12" cy="12" r="10.500" /><path d="M12 5.500v3M9 11h3v6M8.800 17h6.500" /></Stroke></RailButton>
              <RailButton aria-label="Assistant"><Stroke width={2.800} color={c.blue} strokeLinejoin="round"><path d="M12 1.500l9.500 5v11L12 22.500l-9.500-5v-11z" /><path d="M12 12l8 5" /><circle cx="12" cy="12" r="2" fill={c.blue} /></Stroke></RailButton>
            </SideRail>
          </Body>
          <AwsFooter>
            <FooterLink $tool href="#shell"><CloudShellIcon />CloudShell</FooterLink>
            <FooterLink $tool href="#feedback" $lead={36}>Feedback</FooterLink>
            <Copyright>© 2024, Amazon Web Services, Inc. or its affiliates.</Copyright>
            <FooterLink href="#privacy" $lead={43}>Privacy</FooterLink>
            <FooterLink href="#terms" $lead={38}>Terms</FooterLink>
            <FooterLink href="#cookies" $lead={38}>Cookie preferences</FooterLink>
          </AwsFooter>
        </Page>
        <ScrollTrack>
          <svg width="12" height="7" viewBox="0 0 12 7" aria-hidden="true"><path d="M0 7l6-7 6 7z" fill="#a3a3a3" /></svg>
          <ScrollThumb />
          <svg width="12" height="7" viewBox="0 0 12 7" aria-hidden="true"><path d="M0 0l6 7 6-7z" fill="#505050" /></svg>
        </ScrollTrack>
      </Frame>
      <TaskbarArea />
    </Desktop>
  );
}
